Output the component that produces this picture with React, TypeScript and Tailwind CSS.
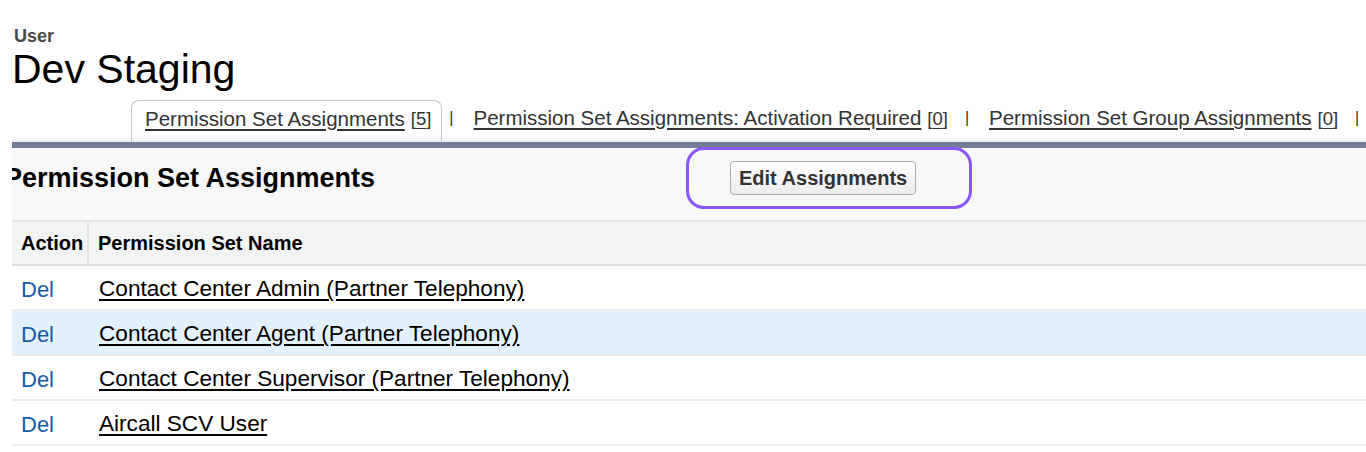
import React from 'react';

const tabs = [
  { label: 'Permission Set Assignments', count: 5, active: true },
  { label: 'Permission Set Assignments: Activation Required', count: 0, active: false },
  { label: 'Permission Set Group Assignments', count: 0, active: false },
];

const rows = [
  'Contact Center Admin (Partner Telephony)',
  'Contact Center Agent (Partner Telephony)',
  'Contact Center Supervisor (Partner Telephony)',
  'Aircall SCV User',
];

export default function App() {
  return (
    <div
      className="w-full h-[452px] overflow-hidden bg-white"
      style={{ fontFamily: '"Liberation Sans", Arial, sans-serif' }}
    >
      <div className="pl-[12px]">
        {/* page title */}
        <div className="pt-[26px]">
          <div className="ml-[2px] text-[18px] leading-[20px] font-bold text-[#4a4a4a]">User</div>
          <h1 className="text-[41px] leading-[46px] text-black">Dev Staging</h1>
        </div>

        {/* tab strip */}
        <div className="mt-[8px] h-[42px] flex items-stretch pl-[119px] whitespace-nowrap bg-[linear-gradient(to_bottom,transparent_85%,#ececec)]">
          {tabs.map((t) => (
            <React.Fragment key={t.label}>
              <div
                className={
                  t.active
                    ? 'shrink-0 flex items-center pb-[5px] pl-[13px] pr-[10px] border border-b-0 border-[#c8c8c8] rounded-t-[8px] bg-[linear-gradient(to_bottom,#ffffff_80%,#eeeeee)]'
                    : 'shrink-0 flex items-center pb-[5px] pl-[13px] pr-[10px]'
                }
              >
                <span className="text-[20.5px] text-[#333] underline underline-offset-[3px]">{t.label}</span>
                <span className="ml-[6px] text-[18.5px] text-[#333]">
                  [<span className="underline underline-offset-[3px]">{t.count}</span>]
                </span>
              </div>
              <div className="shrink-0 flex items-center pb-[7px] mx-[7px] text-[16px] text-[#333]">|</div>
            </React.Fragment>
          ))}
        </div>
        <div className="h-[6px] bg-[#747e98]" />

        {/* section header */}
        <div className="relative h-[72px] bg-[#f8f8f8] flex items-start pt-[13px]">
          <div className="w-[718px] shrink-0 overflow-hidden pt-[2px]">
            <h2 className="-ml-[8px] text-[27px] leading-[30px] font-bold text-black whitespace-nowrap">
              Permission Set Assignments
            </h2>
          </div>
          <button className="h-[34px] px-[8px] border border-[#adadad] rounded-[4px] bg-[linear-gradient(to_bottom,#ffffff,#ececec)] text-[20px] font-bold text-[#333] leading-none">
            Edit Assignments
          </button>
          <div className="absolute left-[674px] top-[-1px] w-[286px] h-[62px] border-[3px] border-[#8a55fb] rounded-[18px] pointer-events-none" />
        </div>

        {/* table */}
        <div className="border-t-2 border-[#e3e3e3]">
          <div className="h-[44px] flex bg-[#f2f3f3] border-b-2 border-[#e0e0e0] text-[20px] font-bold text-black">
            <div className="w-[77px] flex items-center pl-[9px] border-r-2 border-[#e3e3e3]">Action</div>
            <div className="flex items-center pl-[9px]">Permission Set Name</div>
          </div>
          {rows.map((r, i) => (
            <div
              key={r}
              className={
                i === 1
                  ? 'h-[45px] flex items-center pt-[3px] border-b-2 border-[#ececec] bg-[#e3f1fd]'
                  : 'h-[45px] flex items-center pt-[3px] border-b-2 border-[#ececec]'
              }
            >
              <div className="w-[77px] pl-[9px] text-[22px] text-[#1b5aa9]">Del</div>
              <div className="pl-[10px] text-[22.6px] text-black underline underline-offset-[3px]">{r}</div>
            </div>
          ))}
        </div>
      </div>
    </div>
  );
}
